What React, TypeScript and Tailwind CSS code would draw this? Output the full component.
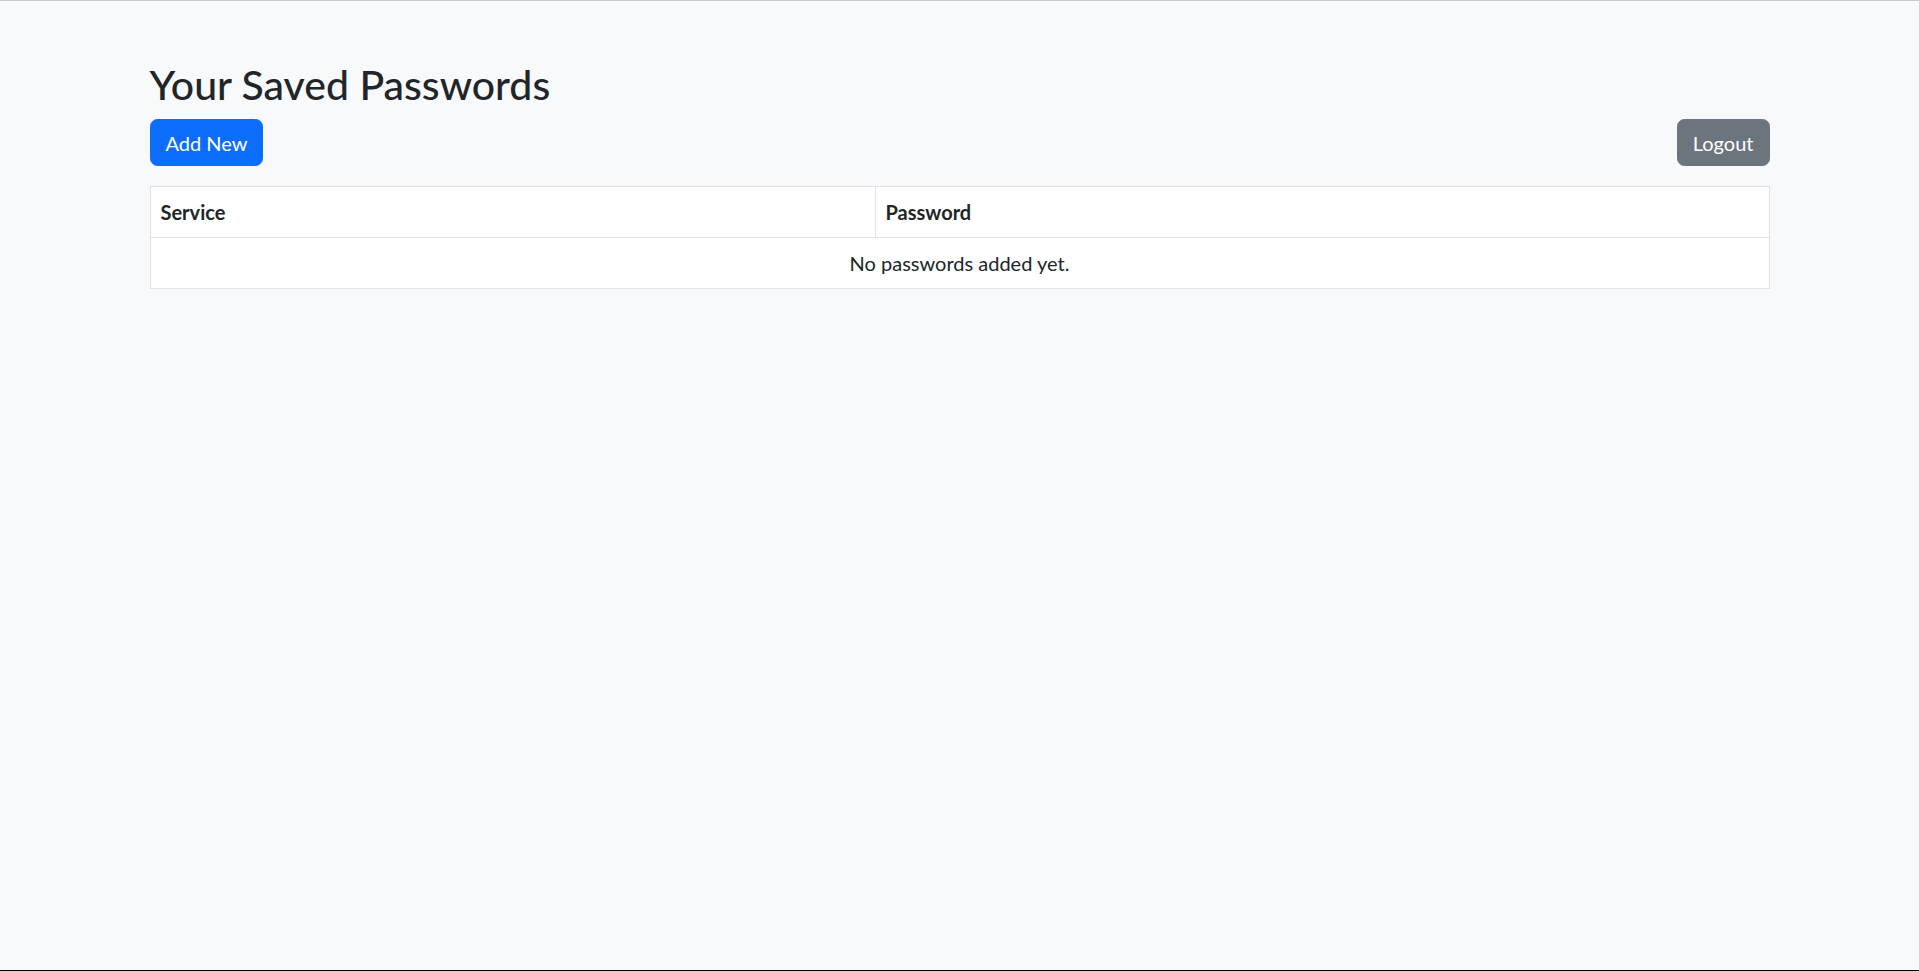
import React from "react";

export default function App() {
  return (
    <div
      className="h-[971px] bg-[#f8f9fa] border-t border-b border-t-[#c8c9cb] border-b-black text-[#212529] text-[20px] leading-[30px]"
      style={{ fontFamily: 'Lato, "Noto Sans", sans-serif' }}
    >
      <div className="mx-auto w-[1650px] px-[15px] pt-[60px]">
        <h2 className="text-[41px] leading-[48px] font-medium mb-[10px]">
          Your Saved Passwords
        </h2>
        <div className="flex items-center justify-between mb-[20px]">
          <button className="bg-[#0d6efd] text-white border border-[#0d6efd] rounded-[7.5px] px-[15px] py-[7.5px] leading-[30px]">
            Add New
          </button>
          <button className="bg-[#6c757d] text-white border border-[#6c757d] rounded-[7.5px] px-[15px] py-[7.5px] leading-[30px]">
            Logout
          </button>
        </div>
        <table className="w-full border-collapse bg-white border border-[#dee2e6]">
          <thead>
            <tr>
              <th className="w-[725px] text-left font-bold p-[10px] border border-[#dee2e6]">
                Service
              </th>
              <th className="text-left font-bold p-[10px] border border-[#dee2e6]">
                Password
              </th>
            </tr>
          </thead>
          <tbody>
            <tr>
              <td colSpan={2} className="text-center p-[10px] border border-[#dee2e6]">
                No passwords added yet.
              </td>
            </tr>
          </tbody>
        </table>
      </div>
    </div>
  );
}
